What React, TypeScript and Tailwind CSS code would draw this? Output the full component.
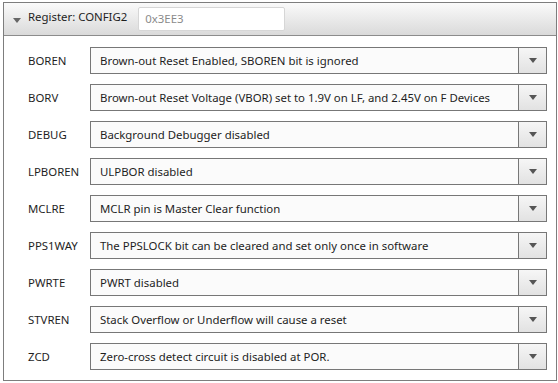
import React from 'react';

const rows: [string, string][] = [
  ['BOREN', 'Brown-out Reset Enabled, SBOREN bit is ignored'],
  ['BORV', 'Brown-out Reset Voltage (VBOR) set to 1.9V on LF, and 2.45V on F Devices'],
  ['DEBUG', 'Background Debugger disabled'],
  ['LPBOREN', 'ULPBOR disabled'],
  ['MCLRE', 'MCLR pin is Master Clear function'],
  ['PPS1WAY', 'The PPSLOCK bit can be cleared and set only once in software'],
  ['PWRTE', 'PWRT disabled'],
  ['STVREN', 'Stack Overflow or Underflow will cause a reset'],
  ['ZCD', 'Zero-cross detect circuit is disabled at POR.'],
];

const Caret = ({ color = '#555' }: { color?: string }) => (
  <svg width="8" height="5" viewBox="0 0 8 5">
    <path d="M0 0h8L4 5z" fill={color} />
  </svg>
);

const App: React.FC = () => {
  return (
    <div
      className="w-[558px] h-[383px] bg-white pl-[3px] pt-[2px] text-[11.4px] text-[#1e1e1e]"
      style={{ fontFamily: '"Noto Sans", "Open Sans", sans-serif' }}
    >
      <div className="w-[554px] h-[379px] border border-[#7d7d7d] flex flex-col">
        <div className="h-[33px] flex items-center bg-gradient-to-b from-[#fafafa] to-[#dadada] border-b border-[#8c8c8c] shrink-0">
          <div className="w-[24px] flex justify-center pl-[1px] pt-[3px]">
            <Caret color="#666" />
          </div>
          <span className="-mt-[5px]">Register: CONFIG2</span>
          <div className="ml-[11px] w-[147px] h-[24px] bg-white border border-[#d6d6d6] rounded-[2px] flex items-center pl-[6px] text-[#8a8a8a]">
            0x3EE3
          </div>
        </div>
        <div className="flex flex-col gap-[10px] pt-[11px] pl-[24px]">
          {rows.map(([label, value]) => (
            <div key={label} className="flex items-center h-[27px]">
              <div className="w-[62px]">{label}</div>
              <div className="w-[457px] h-[27px] border border-[#777] flex bg-[#fbfbfb]">
                <div className="flex-1 flex items-center pl-[9px] whitespace-nowrap overflow-hidden">{value}</div>
                <div className="w-[28px] border-l border-[#777] bg-gradient-to-b from-[#f6f6f6] to-[#e2e2e2] flex items-center justify-center">
                  <Caret />
                </div>
              </div>
            </div>
          ))}
        </div>
      </div>
    </div>
  );
};

export default App;
